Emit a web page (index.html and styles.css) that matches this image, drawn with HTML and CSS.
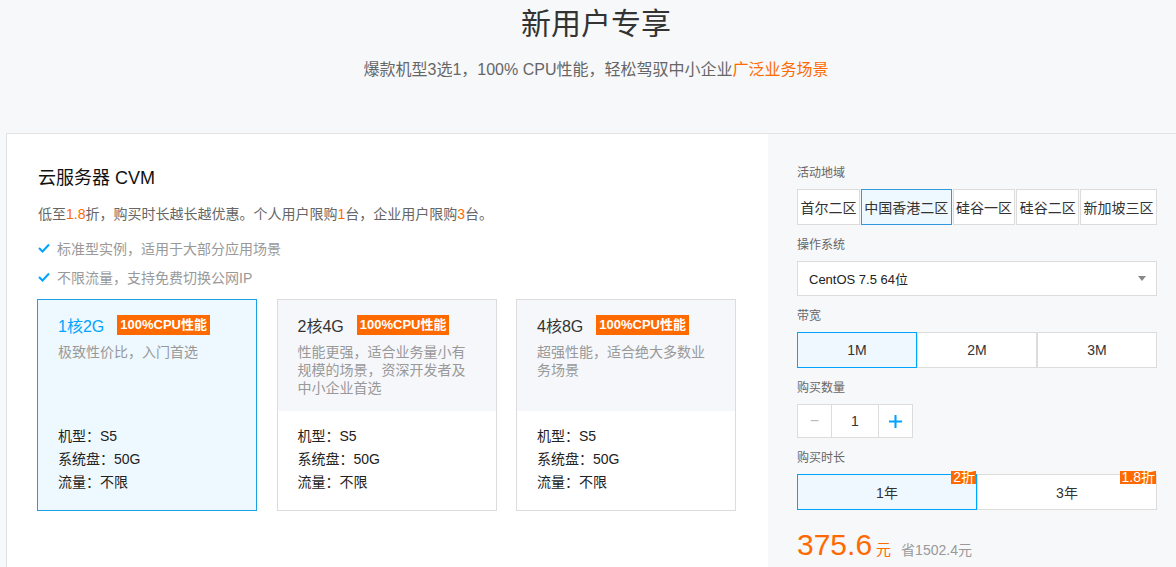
FILE: index.html
```html
<!DOCTYPE html>
<html lang="zh-CN">
<head>
<meta charset="utf-8">
<title>新用户专享</title>
<link rel="stylesheet" href="styles.css">
</head>
<body>
<header class="hero">
  <h1 class="hero-title">新用户专享</h1>
  <p class="hero-sub">爆款机型3选1，100% CPU性能，轻松驾驭中小企业<span class="hl">广泛业务场景</span></p>
</header>
<main class="panel">
  <section class="product">
    <h2 class="product-title">云服务器 CVM</h2>
    <p class="product-desc">低至<span class="hl">1.8</span>折，购买时长越长越优惠。个人用户限购<span class="hl">1</span>台，企业用户限购<span class="hl">3</span>台。</p>
    <ul class="features">
      <li><svg class="check" viewBox="0 0 12 10" width="12" height="10"><path d="M1 5 L4.5 8.5 L11 1.5" fill="none" stroke="#00a4ff" stroke-width="2"/></svg>标准型实例，适用于大部分应用场景</li>
      <li><svg class="check" viewBox="0 0 12 10" width="12" height="10"><path d="M1 5 L4.5 8.5 L11 1.5" fill="none" stroke="#00a4ff" stroke-width="2"/></svg>不限流量，支持免费切换公网IP</li>
    </ul>
    <div class="cards">
      <div class="card selected">
        <div class="card-top">
          <div class="card-head"><span class="card-name">1核2G</span><span class="tag">100%CPU性能</span></div>
          <p class="card-desc">极致性价比，入门首选</p>
        </div>
        <ul class="specs">
          <li>机型：S5</li>
          <li>系统盘：50G</li>
          <li>流量：不限</li>
        </ul>
      </div>
      <div class="card">
        <div class="card-top">
          <div class="card-head"><span class="card-name">2核4G</span><span class="tag">100%CPU性能</span></div>
          <p class="card-desc">性能更强，适合业务量小有规模的场景，资深开发者及中小企业首选</p>
        </div>
        <ul class="specs">
          <li>机型：S5</li>
          <li>系统盘：50G</li>
          <li>流量：不限</li>
        </ul>
      </div>
      <div class="card">
        <div class="card-top">
          <div class="card-head"><span class="card-name">4核8G</span><span class="tag">100%CPU性能</span></div>
          <p class="card-desc">超强性能，适合绝大多数业务场景</p>
        </div>
        <ul class="specs">
          <li>机型：S5</li>
          <li>系统盘：50G</li>
          <li>流量：不限</li>
        </ul>
      </div>
    </div>
  </section>
  <aside class="config">
    <div class="label">活动地域</div>
    <div class="regions">
      <span class="opt">首尔二区</span>
      <span class="opt active">中国香港二区</span>
      <span class="opt">硅谷一区</span>
      <span class="opt">硅谷二区</span>
      <span class="opt">新加坡三区</span>
    </div>
    <div class="label">操作系统</div>
    <div class="select"><span>CentOS 7.5 64位</span><span class="caret"></span></div>
    <div class="label">带宽</div>
    <div class="seg">
      <span class="opt active">1M</span>
      <span class="opt">2M</span>
      <span class="opt">3M</span>
    </div>
    <div class="label">购买数量</div>
    <div class="stepper">
      <span class="step minus">−</span>
      <span class="step value">1</span>
      <span class="step plus"><svg viewBox="0 0 16 16" width="15" height="15"><path d="M8 1 V15 M1 8 H15" stroke="#00a4ff" stroke-width="2.2" fill="none"/></svg></span>
    </div>
    <div class="label">购买时长</div>
    <div class="seg">
      <span class="opt active">1年<em class="badge">2折</em></span>
      <span class="opt">3年<em class="badge">1.8折</em></span>
    </div>
    <div class="price"><span class="amount">375.6</span><span class="unit">元</span><span class="save">省1502.4元</span></div>
  </aside>
</main>
</body>
</html>
```
FILE: styles.css
```css
* { box-sizing: border-box; }
html, body { margin: 0; padding: 0; }
body {
  background: #f7f8fa;
  font-family: "Liberation Sans", Arial, "Noto Sans CJK SC", sans-serif;
  color: #333;
  height: 567px;
  overflow: hidden;
}
ul { list-style: none; margin: 0; padding: 0; }
p, h1, h2 { margin: 0; }

.hero { height: 133px; text-align: center; padding: 4px 0 0 16px; }
.hero-title { font-size: 30px; font-weight: normal; line-height: 40px; color: #333; }
.hero-sub { margin-top: 14px; font-size: 16px; line-height: 24px; color: #666; }
.hl { color: #ff6a00; }

.panel {
  display: flex;
  margin-left: 6px;
  border-top: 1px solid #e2e2e2;
  border-left: 1px solid #e2e2e2;
  min-height: 600px;
}
.product { width: 761px; background: #fff; padding: 32px 0 0 30px; }
.product-title { font-size: 18px; font-weight: normal; line-height: 24px; color: #111; padding-left: 1px; }
.product-desc { margin-top: 14px; font-size: 14px; line-height: 20px; color: #666; padding-left: 1px; }
.features { margin-top: 9px; }
.features li { display: flex; align-items: center; height: 29px; font-size: 14px; color: #999; padding-left: 1px; }
.check { margin-right: 7px; }

.cards { display: flex; gap: 19.5px; margin-top: 8px; }
.card { width: 220px; height: 212px; border: 1px solid #dcdcdc; background: #fff; }
.card-top { height: 111px; background: #f5f7fa; padding: 15px 20px 0; }
.card.selected { border-color: #1aa0e6; background: #eef8ff; }
.card.selected .card-top { background: transparent; }
.card-head { display: flex; align-items: center; height: 20px; }
.card-name { font-size: 16px; color: #333; }
.card.selected .card-name { color: #00a4ff; }
.tag { margin-left: 13px; background: #ff6a00; color: #fff; font-size: 13px; font-weight: bold; line-height: 20px; padding: 0 3px; }
.card-desc { margin-top: 8px; font-size: 14px; line-height: 18px; color: #999; }
.specs { padding: 14px 20px 0; }
.specs li { font-size: 14px; line-height: 23px; color: #222; }

.config { width: 408px; padding: 31px 19px 0 29px; }
.label { font-size: 12px; line-height: 16px; color: #666; margin-bottom: 8px; }
.regions, .seg, .select, .stepper { margin-bottom: 12px; }
.regions { display: flex; height: 36px; }
.regions .opt { flex: 1 1 auto; padding: 0 2px; }
.opt {
  display: flex; align-items: center; justify-content: center;
  border: 1px solid #dcdcdc; background: #fff; font-size: 14px; color: #333;
  position: relative; white-space: nowrap;
}
.opt.active { border-color: #1aa0e6; background: #eef8ff; }
.regions .opt + .opt { margin-left: 1px; }
.regions .opt.active { border-color: #3399dd; }
.select {
  height: 35px; background: #fff; border: 1px solid #dcdcdc;
  display: flex; align-items: center; justify-content: space-between;
  padding: 0 10px 0 11px; font-size: 13px; color: #222;
}
.caret { width: 0; height: 0; border-left: 4px solid transparent; border-right: 4px solid transparent; border-top: 5px solid #888; }
.seg { display: flex; height: 36px; }
.seg .opt { flex: 1; }
.seg .opt.active { border-color: #00a4ff; background: #f0f8ff; }
.stepper { display: flex; height: 34px; }
.step { display: flex; align-items: center; justify-content: center; border: 1px solid #dcdcdc; background: #fff; font-size: 14px; color: #333; }
.step + .step { margin-left: -1px; }
.minus { width: 35px; color: #bbb; font-size: 16px; }
.value { width: 48px; }
.plus { width: 35px; }
.badge {
  position: absolute; top: -4px; right: 0;
  background: #ff6a00; color: #fff; font-style: normal; font-size: 14px; line-height: 13px; padding: 0 1px 0 2px;
}
.price { margin-top: 17px; display: flex; align-items: baseline; }
.amount { font-size: 30px; line-height: 36px; color: #ff6a00; }
.unit { font-size: 15px; color: #ff6a00; margin-left: 4px; }
.save { font-size: 14px; color: #999; margin-left: 10px; }
```
